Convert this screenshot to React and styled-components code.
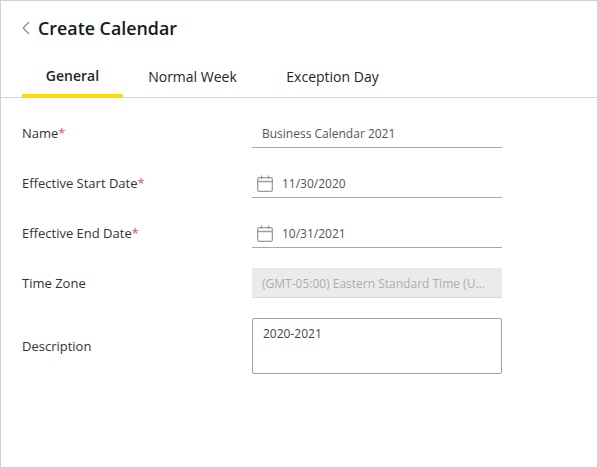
import React from "react";
import styled, { createGlobalStyle } from "styled-components";

const Global = createGlobalStyle`
  html, body { margin: 0; padding: 0; background: #fff; }
  * { box-sizing: border-box; }
`;

const Page = styled.div`
  width: 598px;
  height: 468px;
  border: 1px solid #d0d0d0;
  font-family: "Open Sans", sans-serif;
  font-size: 13px;
  color: #333;
  overflow: hidden;
`;

const Header = styled.div`
  display: flex;
  align-items: center;
  gap: 8px;
  height: 54px;
  padding-left: 21px;
`;

const Title = styled.h1`
  margin: 0;
  font-size: 17.85px;
  font-weight: 600;
  color: #1a1a1a;
`;

const Tabs = styled.div`
  display: flex;
  height: 43px;
  padding-left: 21px;
  border-bottom: 1px solid #d5d5d5;
`;

const Tab = styled.div`
  width: ${(p) => p.$w}px;
  height: 43px;
  padding-top: ${(p) => (p.$active ? 11 : 12)}px;
  text-align: center;
  font-size: 14px;
  font-weight: ${(p) => (p.$active ? 600 : 400)};
  color: #262626;
  border-bottom: ${(p) => (p.$active ? "4px solid #ffdc00" : "none")};
`;

const Form = styled.div`
  display: flex;
  flex-direction: column;
  padding: 20px 0 0 21px;
  gap: 20px;
`;

const Row = styled.div`
  display: flex;
  align-items: center;
`;

const Label = styled.div`
  width: 230px;
  font-size: 13px;
  color: #333;
`;

const Req = styled.span`
  color: #ee4b4f;
`;

const Field = styled.div`
  display: flex;
  align-items: center;
  gap: 9px;
  width: 250px;
  height: 30px;
  padding-top: 1px;
  padding-left: ${(p) => (p.$icon ? 5 : 10)}px;
  border-bottom: 1px solid #a8a8a8;
  font-size: 12px;
  color: #555;
`;

const Disabled = styled(Field)`
  background: #ebebeb;
  color: #adadad;
  border-bottom: 1px solid #d8d8d8;
  white-space: nowrap;
  overflow: hidden;
`;

const TextArea = styled.div`
  width: 250px;
  height: 56px;
  padding: 6px 10px;
  border: 1px solid #a0a0a0;
  border-radius: 2px;
  font-size: 12px;
  color: #444;
`;

const CalendarIcon = () => (
  <svg width="16" height="17" viewBox="0 0 16 17" fill="none" stroke="#9c9c9c" strokeWidth="1.3">
    <rect x="0.65" y="2.65" width="14.7" height="13.7" rx="1.6" />
    <path d="M0.65 6.5h14.7M4.5 0.5v3.5M11.5 0.5v3.5" />
  </svg>
);

const BackIcon = () => (
  <svg width="8" height="14" viewBox="0 0 8 14" fill="none" stroke="#8a8a8a" strokeWidth="1.2">
    <path d="M7 1 1.2 7 7 13" />
  </svg>
);

export default function App() {
  return (
    <Page>
      <Global />
      <Header>
        <BackIcon />
        <Title>Create Calendar</Title>
      </Header>
      <Tabs>
        <Tab $w={101} $active>General</Tab>
        <Tab $w={139}>Normal Week</Tab>
        <Tab $w={141}>Exception Day</Tab>
      </Tabs>
      <Form>
        <Row>
          <Label>Name<Req>*</Req></Label>
          <Field>Business Calendar 2021</Field>
        </Row>
        <Row>
          <Label>Effective Start Date<Req>*</Req></Label>
          <Field $icon><CalendarIcon />11/30/2020</Field>
        </Row>
        <Row>
          <Label>Effective End Date<Req>*</Req></Label>
          <Field $icon><CalendarIcon />10/31/2021</Field>
        </Row>
        <Row>
          <Label>Time Zone</Label>
          <Disabled>(GMT-05:00) Eastern Standard Time (U...</Disabled>
        </Row>
        <Row>
          <Label>Description</Label>
          <TextArea>2020-2021</TextArea>
        </Row>
      </Form>
    </Page>
  );
}
